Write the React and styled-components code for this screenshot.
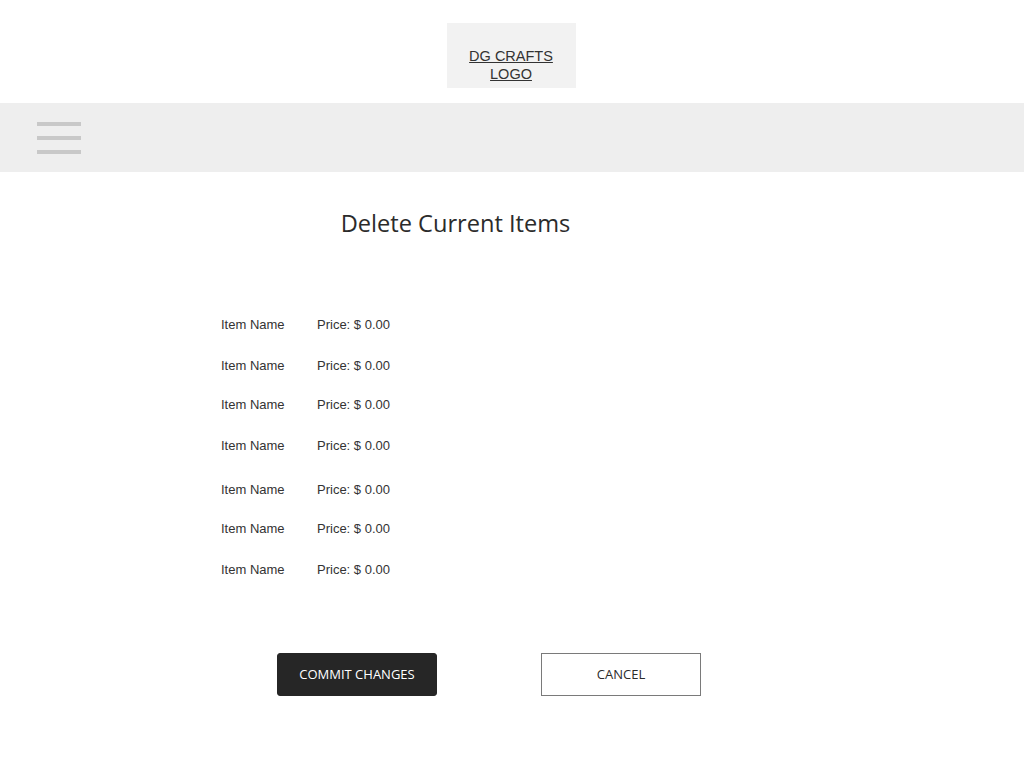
import React from 'react';
import styled, { createGlobalStyle } from 'styled-components';

const items = [
    { name: 'Item Name', price: '0.00', space: 0 },
    { name: 'Item Name', price: '0.00', space: 26 },
    { name: 'Item Name', price: '0.00', space: 24 },
    { name: 'Item Name', price: '0.00', space: 26 },
    { name: 'Item Name', price: '0.00', space: 29 },
    { name: 'Item Name', price: '0.00', space: 24 },
    { name: 'Item Name', price: '0.00', space: 26 },
];

function App() {
    return (
        <Page>
            <GlobalStyle />
            <Header>
                <LogoBox>
                    <LogoLink href="#">DG CRAFTS<br />LOGO</LogoLink>
                </LogoBox>
            </Header>

            <NavBar>
                <MenuButton aria-label="menu">
                    <MenuLine />
                    <MenuLine />
                    <MenuLine />
                </MenuButton>
            </NavBar>

            <Content>
                <Title>Delete Current Items</Title>

                <ItemList>
                    {items.map((item, index) => (
                        <ItemRow key={index} $space={item.space}>
                            <ItemName>{item.name}</ItemName>
                            <ItemPrice>Price: $ {item.price}</ItemPrice>
                        </ItemRow>
                    ))}
                </ItemList>

                <Actions>
                    <Button $primary>COMMIT CHANGES</Button>
                    <Button>CANCEL</Button>
                </Actions>
            </Content>
        </Page>
    );
}

const GlobalStyle = createGlobalStyle`
    html, body {
        margin: 0;
        padding: 0;
        background: #ffffff;
    }
    * {
        box-sizing: border-box;
    }
`;

const Page = styled.div`
    width: 100%;
    min-height: 768px;
    background: #ffffff;
`;

const Header = styled.header`
    height: 103px;
    display: flex;
    justify-content: center;
    padding: 23px 2px 0 0;
`;

const LogoBox = styled.div`
    width: 129px;
    height: 65px;
    background: #f2f2f2;
    padding-top: 24px;
    text-align: center;
`;

const LogoLink = styled.a`
    font-family: "Liberation Sans", Arial, sans-serif;
    font-size: 14.5px;
    line-height: 18px;
    color: #333333;
    text-decoration: underline;
`;

const NavBar = styled.nav`
    height: 69px;
    background: #eeeeee;
    display: flex;
    align-items: flex-start;
    padding: 19px 0 0 37px;
`;

const MenuButton = styled.div`
    width: 44px;
    display: flex;
    flex-direction: column;
    gap: 10px;
    cursor: pointer;
`;

const MenuLine = styled.span`
    display: block;
    height: 4px;
    width: 100%;
    background: #c8c8c8;
`;

const Content = styled.main`
    padding: 35px 0 0 221px;
    display: flex;
    flex-direction: column;
`;

const Title = styled.h1`
    width: 469px;
    margin: 0;
    text-align: center;
    font-family: "Open Sans", sans-serif;
    font-weight: 400;
    font-size: 23.6px;
    line-height: 32px;
    color: #2b2b2b;
`;

const ItemList = styled.ul`
    list-style: none;
    margin: 78px 0 0 0;
    padding: 0;
`;

const ItemRow = styled.li`
    display: flex;
    margin-top: ${props => props.$space}px;
    font-family: "Liberation Sans", Arial, sans-serif;
    font-size: 13px;
    line-height: 15px;
    color: #333333;
`;

const ItemName = styled.span`
    width: 96px;
`;

const ItemPrice = styled.span`
    white-space: nowrap;
`;

const Actions = styled.div`
    display: flex;
    gap: 104px;
    margin: 76px 0 0 56px;
`;

const Button = styled.button`
    width: 160px;
    height: 43px;
    padding: 0 0 1px;
    font-family: "Open Sans", sans-serif;
    font-size: 13px;
    cursor: pointer;
    border-radius: ${props => (props.$primary ? '3px' : '0')};
    background: ${props => (props.$primary ? '#262626' : '#ffffff')};
    color: ${props => (props.$primary ? '#ffffff' : '#2b2b2b')};
    border: 1px solid ${props => (props.$primary ? '#262626' : '#7a7a7a')};
`;

export default App;
